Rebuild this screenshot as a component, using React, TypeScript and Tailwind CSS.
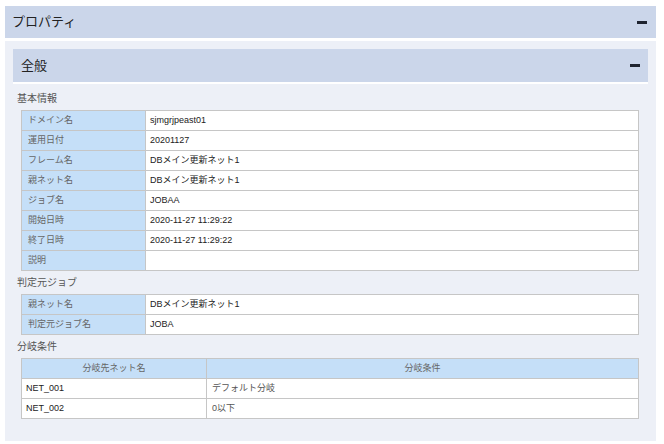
const basic: [string, string][] = [
  ['ドメイン名', 'sjmgrjpeast01'],
  ['運用日付', '20201127'],
  ['フレーム名', 'DBメイン更新ネット1'],
  ['親ネット名', 'DBメイン更新ネット1'],
  ['ジョブ名', 'JOBAA'],
  ['開始日時', '2020-11-27 11:29:22'],
  ['終了日時', '2020-11-27 11:29:22'],
  ['説明', ''],
];

const source: [string, string][] = [
  ['親ネット名', 'DBメイン更新ネット1'],
  ['判定元ジョブ名', 'JOBA'],
];

const branches: [string, string][] = [
  ['NET_001', 'デフォルト分岐'],
  ['NET_002', '0以下'],
];

const Minus = () => <span className="block w-[10px] h-[3px] bg-[#1f2430]" />;

const KeyValueTable = ({ rows }: { rows: [string, string][] }) => (
  <table className="w-full border-collapse text-[9px] leading-none text-[#222]">
    <tbody>
      {rows.map(([k, v]) => (
        <tr key={k}>
          <td className="h-[20px] w-[124px] border border-[#c6c6c6] bg-[#c5dff8] pl-[6px] text-[#666]">{k}</td>
          <td className="h-[20px] border border-[#c6c6c6] bg-white pl-[4px]">{v}</td>
        </tr>
      ))}
    </tbody>
  </table>
);

const SectionLabel = ({ children }: { children: React.ReactNode }) => (
  <div className="h-[23px] flex items-center text-[10px] text-[#555] -ml-[4px]">{children}</div>
);

export default function App() {
  return (
    <div
      className="w-[664px] h-[444px] bg-white pt-[6px] pl-[5px] pr-[8px] overflow-hidden"
      style={{ fontFamily: '"Liberation Sans", "Noto Sans CJK JP", sans-serif' }}
    >
      {/* プロパティ header */}
      <div className="h-[32px] bg-[#cbd6ea] flex items-center justify-between pl-[7px] pr-[9px] border-b-[3px] border-white box-content">
        <span className="text-[13px] text-[#222]">プロパティ</span>
        <Minus />
      </div>

      <div className="bg-[#edf0f7] h-[400px] pt-[8px] pl-[8px] pr-[8px]">
        {/* 全般 header */}
        <div className="h-[33px] bg-[#cbd6ea] flex items-center justify-between pl-[8px] pr-[8px] border-b-[2px] border-white box-content">
          <span className="text-[13px] text-[#222]">全般</span>
          <Minus />
        </div>

        <div className="pl-[8px] pr-[9px] pt-[3px]">
          <SectionLabel>基本情報</SectionLabel>
          <KeyValueTable rows={basic} />

          <SectionLabel>判定元ジョブ</SectionLabel>
          <KeyValueTable rows={source} />

          <SectionLabel>分岐条件</SectionLabel>
          <table className="w-full border-collapse text-[9px] leading-none text-[#222]">
            <thead>
              <tr className="bg-[#c5dff8] text-[#666]">
                <th className="h-[20px] w-[185px] border border-[#c6c6c6] font-normal">分岐先ネット名</th>
                <th className="h-[20px] border border-[#c6c6c6] font-normal">分岐条件</th>
              </tr>
            </thead>
            <tbody>
              {branches.map(([n, c]) => (
                <tr key={n} className="bg-white">
                  <td className="h-[20px] border border-[#c6c6c6] pl-[4px]">{n}</td>
                  <td className="h-[20px] border border-[#c6c6c6] pl-[5px] text-[#555]">{c}</td>
                </tr>
              ))}
            </tbody>
          </table>
        </div>
      </div>
    </div>
  );
}
